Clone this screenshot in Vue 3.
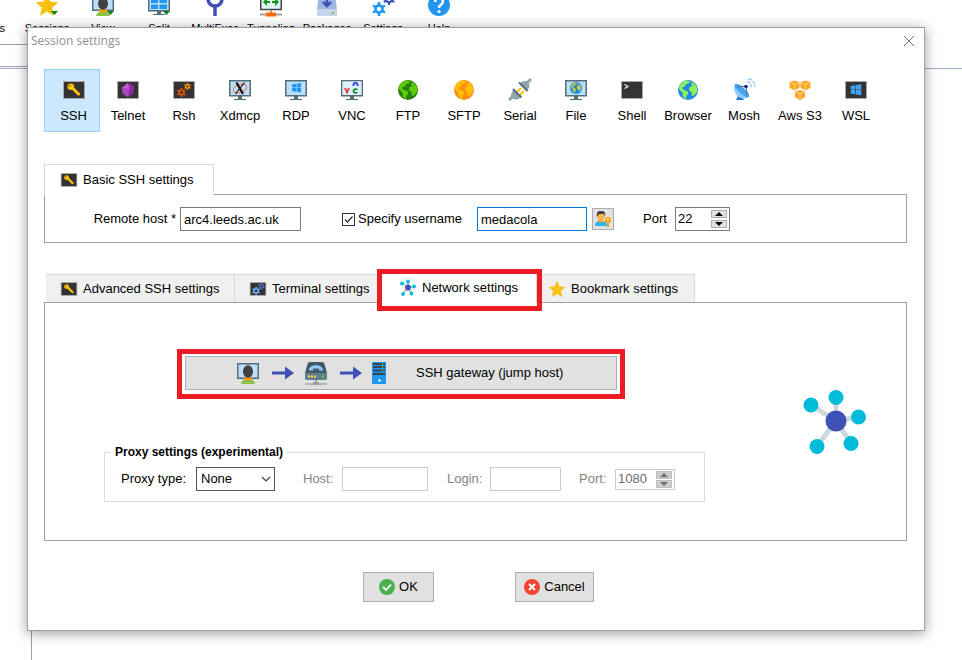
<script setup>
import { ref } from 'vue'

const tools = [
  { name: 'Servers', icon: 'servers' },
  { name: 'Sessions', icon: 'star-menu' },
  { name: 'View', icon: 'view' },
  { name: 'Split', icon: 'split' },
  { name: 'MultiExec', icon: 'fork' },
  { name: 'Tunneling', icon: 'tunnel' },
  { name: 'Packages', icon: 'package' },
  { name: 'Settings', icon: 'gears' },
  { name: 'Help', icon: 'help' },
]
const types = [
  { name: 'SSH', icon: 'key' },
  { name: 'Telnet', icon: 'gem' },
  { name: 'Rsh', icon: 'rsh' },
  { name: 'Xdmcp', icon: 'xdmcp' },
  { name: 'RDP', icon: 'rdp' },
  { name: 'VNC', icon: 'vnc' },
  { name: 'FTP', icon: 'ftp' },
  { name: 'SFTP', icon: 'sftp' },
  { name: 'Serial', icon: 'serial' },
  { name: 'File', icon: 'file' },
  { name: 'Shell', icon: 'shell' },
  { name: 'Browser', icon: 'browser' },
  { name: 'Mosh', icon: 'mosh' },
  { name: 'Aws S3', icon: 'aws' },
  { name: 'WSL', icon: 'wsl' },
]
const selected = ref('SSH')
const tabs = [
  { name: 'Advanced SSH settings', icon: 'key', size: 'wide' },
  { name: 'Terminal settings', icon: 'term-gears', size: 'medium' },
  { name: 'Network settings', icon: 'network-small', size: 'marked' },
  { name: 'Bookmark settings', icon: 'star', size: 'last' },
]
const activeTab = ref('Network settings')
const host = ref('arc4.leeds.ac.uk')
const useName = ref(true)
const username = ref('medacola')
const port = ref(22)
const proxyType = ref('None')
const proxyPort = ref(1080)
</script>

<template>
  <div class="desktop">
    <svg class="defs" aria-hidden="true">
      <symbol id="frame" viewBox="0 0 24 24">
        <rect x="1.5" y="3.5" width="21" height="17" fill="#333" stroke="#a9a9a9" />
      </symbol>
      <symbol id="monitor" viewBox="0 0 24 24">
        <path d="M10 18h4v3h4v1H6v-1h4z" fill="#546e7a" />
        <rect x="1.75" y="2.75" width="20.5" height="15" fill="#bbdefb" stroke="#546e7a" stroke-width="1.5" />
      </symbol>
      <symbol id="gear" viewBox="0 0 12 12">
        <circle cx="6" cy="6" r="3" fill="none" stroke="currentColor" stroke-width="2.2" />
        <path d="M6 0v3M6 9v3M.8 3l2.6 1.5M8.6 7.5L11.2 9M.8 9l2.6-1.5M8.6 4.5L11.2 3" stroke="currentColor" stroke-width="2.2" />
      </symbol>
      <symbol id="land" viewBox="0 0 24 24">
        <path d="M3 9c1-3 4-6 8-6.500l3 1-1 2-3 .5-1 2.500-3 1 1 2 4 1.500 1.500 2.500-2 2-.5 3.500-3-2-.5-4.500-3-2.500zM15.500 4c3 1 5 3.500 5.700 6.500L21 14l-3 3.500-2 .5-.5-4-2.500-1.500.5-3.500 3-1-1.500-2z" fill="currentColor" />
      </symbol>
      <symbol id="windows" viewBox="0 0 24 24">
        <path d="M3 5l8-1.3V11H3zM12 3.5L21 2v9h-9zM3 12h8v7.3L3 18zM12 12h9v9l-9-1.5z" fill="currentColor" />
      </symbol>
      <symbol id="servers" viewBox="0 0 24 24">
        <circle cx="12" cy="12" r="11" fill="#cfd8dc" stroke="#90a4ae" /><path d="M14 17h8l-4 5z" fill="#18851b" />
      </symbol>
      <symbol id="star" viewBox="0 0 24 24">
        <path d="M12 1l3.2 7.5 8 .8-6 5.4 1.8 8L12 18.5 5 22.7l1.8-8-6-5.4 8-.8z" fill="#f4c20d" />
      </symbol>
      <symbol id="star-menu" viewBox="0 0 24 24">
        <use href="#star" /><path d="M16 18h7l-3.500 4z" fill="#11821b" />
      </symbol>
      <symbol id="user-screen" viewBox="0 0 24 24">
        <rect x="1.750" y="2.750" width="20.500" height="14.500" fill="#bbdefb" stroke="#546e7a" stroke-width="1.500" />
        <path d="M5 23c.5-3.500 3-5 7-5s6.500 1.500 7 5z" fill="#8bc34a" />
        <path d="M8.500 16h7v2.500c-2 1.500-5 1.500-7 0z" fill="#ff9800" />
        <ellipse cx="12" cy="10.500" rx="5" ry="6.200" fill="#424242" />
      </symbol>
      <symbol id="view" viewBox="0 0 24 24">
        <use href="#user-screen" /><path d="M16 18h7l-3.500 4z" fill="#11821b" />
      </symbol>
      <symbol id="split" viewBox="0 0 24 24">
        <use href="#monitor" /><path d="M4 5h7v5H4zM12.500 5H20v5h-7.500zM4 11.500h7V16H4zM12.500 11.500H20V16h-7.500z" fill="#2196f3" />
        <path d="M16 18h7l-3.500 4z" fill="#11821b" />
      </symbol>
      <symbol id="fork" viewBox="0 0 24 24">
        <path d="M5 0v6a7 7 0 0 0 14 0V0M12 13v10" fill="none" stroke="#3f51b5" stroke-width="3.500" />
      </symbol>
      <symbol id="tunnel" viewBox="0 0 24 24">
        <rect x="1.750" y="1" width="20.500" height="15.500" fill="#e3f5fd" stroke="#424242" stroke-width="1.500" />
        <path d="M4 9l4-4v3h3v2H8v3zM20 9l-4-4v3h-3v2h3v3z" fill="#0a9c17" />
        <path d="M1 20.500h22v2H1zM11 17h2v3h-2z" fill="#9e9e9e" /><rect x="7" y="19.500" width="10" height="4" fill="#ff6d00" />
      </symbol>
      <symbol id="package" viewBox="0 0 24 24">
        <path d="M4 1h16l2 16H2z" fill="#9fb4df" /><rect x="2" y="16" width="20" height="7" rx="1" fill="#c5d5ee" />
        <path d="M12 3v10M8 9l4 4 4-4" fill="none" stroke="#3f51b5" stroke-width="2.500" /><rect x="17" y="19" width="2" height="2" fill="#64dd17" />
      </symbol>
      <symbol id="gears" viewBox="0 0 24 24">
        <g color="#2196f3"><use href="#gear" x="1" y="9" width="14" height="14" /></g>
        <g color="#3f51b5"><use href="#gear" x="12" y="0" width="12" height="12" /></g>
      </symbol>
      <symbol id="help" viewBox="0 0 24 24">
        <circle cx="12" cy="12" r="11" fill="#2196f3" />
        <path d="M8 9c0-5 8-5 8-.500 0 3-4 3-4 6.500" fill="none" stroke="#fff" stroke-width="2.500" /><circle cx="12" cy="18.500" r="1.600" fill="#fff" />
      </symbol>
      <symbol id="key" viewBox="0 0 24 24">
        <use href="#frame" />
        <path d="M10 9.500l7.500 7.500" stroke="#ffc107" stroke-width="3" /><circle cx="8.800" cy="8.800" r="3.300" fill="#ffc107" /><circle cx="7.800" cy="7.800" r=".7" fill="#333" />
      </symbol>
      <symbol id="gem" viewBox="0 0 24 24">
        <use href="#frame" /><path d="M12 5l6 3.500-1 7-5 3.500-5-3-1.500-6z" fill="#9c27b0" />
        <path d="M12 5l1.500 6-8-1z" fill="#ba68c8" /><path d="M13.500 11l4.500-2.500-1 7-5 3.500z" fill="#8e24aa" /><path d="M5.500 10l8 1L12 19l-5-3z" fill="#ab47bc" />
      </symbol>
      <symbol id="rsh" viewBox="0 0 24 24">
        <use href="#frame" />
        <g color="#e65100"><use href="#gear" x="5" y="10" width="9" height="9" /></g>
        <g color="#ff9800"><use href="#gear" x="12" y="5" width="7" height="7" /></g>
      </symbol>
      <symbol id="term-gears" viewBox="0 0 24 24">
        <use href="#frame" />
        <g color="#64b5f6"><use href="#gear" x="4" y="9" width="11" height="11" /></g>
        <g color="#5c6bc0"><use href="#gear" x="12" y="4" width="9" height="9" /></g>
      </symbol>
      <symbol id="xdmcp" viewBox="0 0 24 24">
        <use href="#monitor" />
        <ellipse cx="12" cy="10.500" rx="7" ry="4" fill="none" stroke="#ff7043" transform="rotate(-20 12 10.500)" />
        <path d="M8.500 4.500l6.500 11.500" stroke="#111" stroke-width="2.200" /><path d="M16.500 4.500L7.500 16" stroke="#111" stroke-width="1.200" />
      </symbol>
      <symbol id="rdp" viewBox="0 0 24 24">
        <use href="#monitor" /><g color="#2196f3"><use href="#windows" x="6" y="4" width="13" height="12" /></g>
      </symbol>
      <symbol id="vnc" viewBox="0 0 24 24">
        <use href="#monitor" /><path d="M2.500 3.500h19V17h-19z" fill="#e1effb" />
        <path d="M5 10l2 4.500L9 10" fill="none" stroke="#e53935" stroke-width="1.800" />
        <path d="M13.500 8V6q2-2.500 4 0v2" fill="none" stroke="#303fdd" stroke-width="1.800" />
        <path d="M17.500 11.500q-4-1-4 1.500t4 1.500" fill="none" stroke="#15852a" stroke-width="1.800" />
      </symbol>
      <symbol id="ftp" viewBox="0 0 24 24">
        <circle cx="12" cy="12" r="10" fill="#2c7d0c" /><g color="#58cf09"><use href="#land" /></g>
      </symbol>
      <symbol id="sftp" viewBox="0 0 24 24">
        <circle cx="12" cy="12" r="10" fill="#ff8f0c" /><g color="#ffc107"><use href="#land" /></g>
      </symbol>
      <symbol id="browser" viewBox="0 0 24 24">
        <circle cx="12" cy="12" r="10" fill="#1e88e5" /><g color="#8cf057"><use href="#land" /></g>
      </symbol>
      <symbol id="serial" viewBox="0 0 24 24">
        <path d="M1 22l4-4M19 5l4-4" stroke="#90a4ae" stroke-width="3" />
        <path d="M9 14l4-4M12 17l4-4" stroke="#ffc107" stroke-width="2" />
        <path d="M5.500 12l7 7c-2 3-6 3-8 1.500s-2-5.500 1-8.500z" fill="#90a4ae" /><path d="M12 5.500l7 7c3-3 3-6 1-8s-5-2-8 1z" fill="#90a4ae" />
        <path d="M5 11l8.500 8.500M11 4.500l8.500 8.500" stroke="#546e7a" stroke-width="2" />
      </symbol>
      <symbol id="file" viewBox="0 0 24 24">
        <use href="#monitor" /><circle cx="12" cy="10" r="6" fill="#1e88e5" /><g color="#c0ca33"><use href="#land" x="5.500" y="3.500" width="13" height="13" /></g>
      </symbol>
      <symbol id="shell" viewBox="0 0 24 24">
        <use href="#frame" /><path d="M4.500 6.500L8 8.500l-3.500 2" fill="none" stroke="#eee" stroke-width="1.200" />
      </symbol>
      <symbol id="mosh" viewBox="0 0 24 24">
        <path d="M4 22l3-6 5 6z" fill="#1976d2" /><path d="M3 6l14 13c-6 3-11 1-13-3s-3-7-1-10z" fill="#90caf9" />
        <ellipse cx="10" cy="12.500" rx="9.500" ry="3" fill="#42a5f5" transform="rotate(43 10 12.500)" />
        <path d="M5 9l9-1 1 9" fill="none" stroke="#546e7a" /><circle cx="14" cy="8.500" r="1.800" fill="#1a237e" />
        <path d="M15 4q4 0 4.500 5M16 1q6 0 7 8" fill="none" stroke="#90caf9" stroke-width="1.300" stroke-dasharray="4 1" />
      </symbol>
      <symbol id="cube" viewBox="0 0 12 12">
        <path d="M6 .5l5.500 2v6L6 11.500.5 8.500v-6z" fill="#ffa726" /><path d="M1 3l5 2 5-2M6 5v6" fill="none" stroke="#ffe0a0" stroke-width=".8" />
      </symbol>
      <symbol id="aws" viewBox="0 0 24 24">
        <use href="#cube" x="1" y="2" width="11" height="11" /><use href="#cube" x="12" y="2" width="11" height="11" /><use href="#cube" x="6.500" y="11.500" width="11" height="11" />
      </symbol>
      <symbol id="wsl" viewBox="0 0 24 24">
        <use href="#frame" /><g color="#42a5f5"><use href="#windows" x="5" y="5" width="14" height="14" /></g>
      </symbol>
      <symbol id="network" viewBox="0 0 66 66">
        <path d="M33 32V9M33 32L8 16M33 32l22-4M33 32l15 22M33 32L14 57" stroke="#cfd8dc" stroke-width="5" />
        <g fill="#00bcd9"><circle cx="33" cy="8.500" r="7.500" /><circle cx="8" cy="16" r="7.500" /><circle cx="55.500" cy="28" r="7.500" /><circle cx="48" cy="54.500" r="7.500" /><circle cx="14" cy="57.500" r="7.500" /></g>
        <circle cx="33" cy="32" r="10.500" fill="#3f51b5" />
      </symbol>
      <symbol id="network-small" viewBox="0 0 18 18">
        <path d="M9 8.500V3M9 8.500L4 4.500M9 8.500l6-1M9 8.500l3.500 6M9 8.500L4 14.500" stroke="#b0bec5" stroke-width="1.500" />
        <g fill="#00bcd9"><circle cx="9" cy="2.500" r="1.900" /><circle cx="3" cy="4.500" r="1.900" /><circle cx="15" cy="7.500" r="1.900" /><circle cx="12.500" cy="14.500" r="1.900" /><circle cx="4" cy="15" r="1.900" /></g>
        <circle cx="9" cy="8.500" r="2.900" fill="#3f51b5" />
      </symbol>
      <symbol id="arrow" viewBox="0 0 24 24">
        <path d="M2 10.500h13V5.500l9 6.500-9 6.500v-5H2z" fill="#3f51b5" />
      </symbol>
      <symbol id="modem" viewBox="0 0 24 24">
        <path d="M6 1h12q2 0 2.500 2L23 12v6H1v-6l2.500-9Q4 1 6 1z" fill="#455a64" /><path d="M1 12h22v5q0 2-2 2H3q-2 0-2-2z" fill="#607d8b" />
        <path d="M5 9.500c0-7 14-7 14 0h-4V7.500H9v2z" fill="#90caf9" />
        <path d="M4 14.500h2v2H4zM7 14.500h2v2H7zM10 14.500h2v2h-2z" fill="#ffe04a" /><path d="M18 14.500h2v2h-2z" fill="#64dd17" />
        <path d="M1 22h22v2H1z" fill="#b0b6b9" /><path d="M11 19h2v2h2v3H9v-3h2z" fill="#9e9e9e" />
      </symbol>
      <symbol id="tower" viewBox="0 0 14 24">
        <path d="M0 1h14v22H0z" fill="#2196f3" /><path d="M1 2h12v2H1zM1 5h12v2H1zM1 8.500h12v2H1zM1 12h12v2H1z" fill="#37474f" />
        <path d="M10 2h1v2h-1zM10 5h1v2h-1zM10 8.500h1v2h-1z" fill="#64dd17" /><path d="M6 19h3v1H6zM7 18h1v3H7z" fill="#fff" />
      </symbol>
      <symbol id="user-key" viewBox="0 0 18 18">
        <path d="M1 16c0-4 2-5 6-5s6 1 6 5z" fill="#29b6f6" /><path d="M5 10h4v2q-2 2-4 0z" fill="#ff9800" />
        <ellipse cx="7" cy="6.500" rx="3.700" ry="4.500" fill="#ffb74d" /><path d="M3 7C2 1 5 1 7 1s5 0 4 6L10 4H5z" fill="#424242" />
        <circle cx="14" cy="10" r="3" fill="#ffa000" /><path d="M13 12h2v5h-2z" fill="#ffa000" /><circle cx="14" cy="9.500" r="1" fill="#fff3e0" />
      </symbol>
    </svg>

    <header class="toolbar">
      <button v-for="t in tools" :key="t.name" class="tool" type="button">
        <svg class="icon"><use :href="'#' + t.icon" /></svg>
        <span>{{ t.name }}</span>
      </button>
    </header>
    <div class="quick"></div>
    <div class="workspace"><div class="terminal"></div></div>

    <section class="dialog" role="dialog" aria-labelledby="dialog-title">
      <div class="titlebar">
        <span id="dialog-title">Session settings</span>
        <button class="close" type="button" aria-label="Close">
          <svg viewBox="0 0 12 12"><path d="M1 1l10 10M11 1L1 11" stroke="#777" fill="none" /></svg>
        </button>
      </div>

      <div class="body">
        <nav class="types">
          <button v-for="t in types" :key="t.name" class="type" :class="{ selected: selected === t.name }" type="button" @click="selected = t.name">
            <svg class="icon"><use :href="'#' + t.icon" /></svg>
            <span>{{ t.name }}</span>
          </button>
        </nav>

        <div class="basic-tab"><svg class="small"><use href="#key" /></svg>Basic SSH settings</div>
        <div class="panel basic">
          <label class="host-label" for="host">Remote host *</label>
          <input id="host" v-model="host" class="field host" type="text">
          <label class="check">
            <input v-model="useName" type="checkbox">
            <svg v-if="useName" class="tick" viewBox="0 0 13 13"><path d="M3 6.500l2.500 2.500 5-5.500" fill="none" stroke="#333" stroke-width="1.300" /></svg>
            <span>Specify username</span>
          </label>
          <input v-model="username" class="field username" type="text" aria-label="Username">
          <button class="creds" type="button" aria-label="Manage credentials"><svg><use href="#user-key" /></svg></button>
          <label class="port-label" for="port">Port</label>
          <div class="spin">
            <input id="port" v-model="port" type="text">
            <div class="steps">
              <button type="button" aria-label="Increase port" @click="port++"><svg viewBox="0 0 8 4"><path d="M0 4l4-4 4 4z" /></svg></button>
              <button type="button" aria-label="Decrease port" @click="port--"><svg viewBox="0 0 8 4"><path d="M0 0l4 4 4-4z" /></svg></button>
            </div>
          </div>
        </div>

        <div class="tabs" role="tablist">
          <button v-for="t in tabs" :key="t.name" class="tab" :class="[t.size, { active: activeTab === t.name }]" role="tab" type="button" :aria-selected="activeTab === t.name" @click="activeTab = t.name">
            <svg class="small"><use :href="'#' + t.icon" /></svg>{{ t.name }}
          </button>
        </div>
        <div class="panel network">
          <div class="options">
            <div class="highlight">
              <button class="gateway" type="button">
                <svg class="icon"><use href="#user-screen" /></svg>
                <svg class="icon"><use href="#arrow" /></svg>
                <svg class="icon"><use href="#modem" /></svg>
                <svg class="icon"><use href="#arrow" /></svg>
                <svg class="tower"><use href="#tower" /></svg>
                <span>SSH gateway (jump host)</span>
              </button>
            </div>
            <fieldset class="proxy">
              <legend>Proxy settings (experimental)</legend>
              <div class="proxy-row">
                <label class="proxy-type" for="ptype">Proxy type:</label>
                <div class="select">
                  <select id="ptype" v-model="proxyType"><option>None</option><option>HTTP</option><option>Socks5</option></select>
                  <svg viewBox="0 0 10 6"><path d="M1 1l4 4 4-4" fill="none" stroke="#444" stroke-width="1.200" /></svg>
                </div>
                <label class="dim phost-label" for="phost">Host:</label>
                <input id="phost" class="field phost" type="text" disabled>
                <label class="dim plogin-label" for="plogin">Login:</label>
                <input id="plogin" class="field plogin" type="text" disabled>
                <label class="dim pport-label" for="pport">Port:</label>
                <div class="spin off">
                  <input id="pport" v-model="proxyPort" type="text" disabled>
                  <div class="steps">
                    <button type="button" disabled aria-label="Increase proxy port"><svg viewBox="0 0 8 4"><path d="M0 4l4-4 4 4z" /></svg></button>
                    <button type="button" disabled aria-label="Decrease proxy port"><svg viewBox="0 0 8 4"><path d="M0 0l4 4 4-4z" /></svg></button>
                  </div>
                </div>
              </div>
            </fieldset>
          </div>
          <svg class="emblem"><use href="#network" /></svg>
        </div>

        <footer class="actions">
          <button type="button" class="action ok">
            <svg viewBox="0 0 16 16"><circle cx="8" cy="8" r="8" fill="#4caf50" /><path d="M4 8l3 3 5-5.500" fill="none" stroke="#fff" stroke-width="1.800" /></svg>OK
          </button>
          <button type="button" class="action cancel">
            <svg viewBox="0 0 16 16"><circle cx="8" cy="8" r="8" fill="#f44336" /><path d="M5 5l6 6M11 5l-6 6" stroke="#fff" stroke-width="2" /></svg>Cancel
          </button>
        </footer>
      </div>
    </section>
  </div>
</template>

<style>
body { margin: 0; background: #fff; }
</style>

<style scoped>
.desktop, .desktop * { box-sizing: border-box; }
.desktop {
  position: relative;
  display: flex;
  flex-direction: column;
  min-height: 100vh;
  overflow: hidden;
  font: 13px/16px "Liberation Sans", Arial, sans-serif;
  color: #000;
}
.defs { position: absolute; width: 0; height: 0; }
button, input, select { font: inherit; color: inherit; margin: 0; }
button { padding: 0; border: 0; background: none; }
svg { display: block; flex: none; }
.icon { width: 24px; height: 24px; }
.small { width: 18px; height: 18px; }

.toolbar { display: flex; margin: -7px 0 0 -37px; height: 51px; }
.tool {
  width: 56px;
  flex: none;
  display: flex;
  flex-direction: column;
  align-items: center;
  gap: 3px;
  font-size: 11px;
}
.tool:first-child { padding-right: 10px; }
.quick { width: 200px; height: 23px; border: solid #a0a0a0; border-width: 1px 0; }
.workspace { flex: 1; margin-top: 1px; border-top: 1px solid #9fb0cc; padding-left: 31px; display: flex; }
.terminal { flex: 1; border-left: 1px solid #a0a0a0; }

.dialog {
  position: absolute;
  top: 27px;
  left: 27px;
  right: 37px;
  background: #fff;
  border: 1px solid #a0a0a0;
  box-shadow: 0 2px 12px rgba(0, 0, 0, 0.4);
}
.titlebar {
  height: 25px;
  display: flex;
  align-items: center;
  justify-content: space-between;
  padding: 0 9px 0 3px;
  font: 12px/16px "Open Sans", "Noto Sans", sans-serif;
  color: #8f8f8f;
}
.close svg { width: 12px; height: 12px; }
.body { padding: 16px 17px 28px 16px; }

.types { display: flex; margin-bottom: 32px; }
.type {
  width: 56px;
  height: 63px;
  display: flex;
  flex-direction: column;
  align-items: center;
  justify-content: center;
  gap: 6px;
  border: 1px solid transparent;
  white-space: nowrap;
}
.type.selected { background: #cce8ff; border-color: #99d1ff; padding: 1px 0 0 3px; }

.basic-tab {
  position: relative;
  width: 170px;
  height: 31px;
  margin-bottom: -1px;
  padding-left: 15px;
  display: flex;
  align-items: center;
  gap: 5px;
  background: #fff;
  border: 1px solid #d9d9d9;
  border-bottom: 0;
}
.panel { border: 1px solid #a0a0a0; }
.basic { display: flex; align-items: center; padding: 12px 0 11px 48px; }
.host-label { width: 83px; margin-right: 4px; text-align: right; }
.field { height: 24px; padding: 0 3px; border: 1px solid #7a7a7a; background: #fff; border-radius: 0; outline: 0; }
.host { width: 121px; }
.check { width: 130px; margin: 0 5px 0 41px; display: grid; grid-template-columns: 13px 1fr; align-items: center; gap: 3px; }
.check input, .tick { grid-area: 1 / 1; width: 13px; height: 13px; }
.check input { appearance: none; border: 1px solid #333; background: #fff; }
.tick { pointer-events: none; }
.check span { grid-area: 1 / 2; }
.username { width: 110px; border-color: #0078d7; }
.creds { width: 22px; height: 22px; margin: 0 29px 0 5px; display: grid; place-items: center; background: #e1e1e1; border: 1px solid #adadad; }
.creds svg { width: 18px; height: 18px; }
.port-label { width: 32px; }
.spin { width: 55px; height: 24px; display: flex; border: 1px solid #7a7a7a; padding: 2px; }
.spin input { flex: 1; min-width: 0; padding: 0; border: 0; background: none; outline: 0; }
.steps { width: 16px; display: flex; flex-direction: column; justify-content: space-between; }
.steps button { height: 8px; display: grid; place-items: center; background: #e1e1e1; border: 1px solid #adadad; }
.steps svg { width: 8px; height: 4px; }

.tabs { display: flex; align-items: flex-end; margin-top: 29px; padding-left: 2px; }
.tab {
  height: 28px;
  display: flex;
  align-items: center;
  gap: 5px;
  padding-left: 14px;
  background: #f0f0f0;
  border: 1px solid #d9d9d9;
  border-width: 1px 1px 0 0;
  white-space: nowrap;
}
.wide { width: 189px; }
.medium { width: 147px; }
.marked { width: 155px; padding-left: 17px; }
.last { width: 158px; padding-left: 11px; }
.tab.active { height: 31px; margin-bottom: -1px; background: #fff; }
.marked { position: relative; z-index: 1; }
.marked::after { content: ""; position: absolute; inset: -4px -6px -8px -5px; border: 5px solid #ed1c24; }
.network { display: flex; align-items: center; justify-content: space-between; padding-right: 37px; }
.options { padding: 46px 0 38px 59px; }
.highlight { width: 448px; margin-left: 73px; border: 5px solid #ed1c24; padding: 2px 3px 4px; }
.gateway {
  width: 100%;
  height: 34px;
  display: flex;
  align-items: center;
  padding-left: 50px;
  gap: 10px;
  background: #e1e1e1;
  border: 1px solid #adadad;
}
.gateway .tower { width: 14px; height: 24px; }
.gateway span { margin-left: 20px; }

.proxy { width: 601px; min-width: 0; margin: 46px 0 0; padding: 8px 29px 10px 16px; border: 1px solid #dcdcdc; }
.proxy legend { margin-left: -10px; padding: 0 4px; font: bold 12px/14px "Liberation Sans", Arial, sans-serif; }
.proxy-row { display: flex; align-items: center; }
.proxy-type { width: 75px; white-space: nowrap; }
.select { display: grid; width: 79px; align-items: center; }
.select select, .select svg { grid-area: 1 / 1; }
.select select { appearance: none; height: 24px; padding: 0 4px; background: #fff; border: 1px solid #555; border-radius: 0; }
.select svg { width: 10px; height: 6px; justify-self: end; margin-right: 4px; pointer-events: none; }
.dim { color: #838383; }
.field:disabled { border-color: #ccc; }
.phost-label { width: 39px; margin-left: 28px; }
.phost { width: 86px; }
.plogin-label { width: 43px; margin-left: 19px; }
.plogin { width: 71px; }
.pport-label { width: 36px; margin-left: 18px; }
.spin.off { width: 60px; height: 21px; border-color: #ccc; padding: 1px 2px; color: #6d6d6d; }
.off .steps button { background: #ccc; border-color: #bfbfbf; }
.off .steps svg { fill: #6d6d6d; }
.emblem { width: 66px; height: 66px; }

.actions { display: flex; justify-content: center; gap: 81px; margin-top: 31px; padding-left: 6px; }
.action { height: 30px; display: flex; align-items: center; justify-content: center; gap: 4px; background: #e1e1e1; border: 1px solid #adadad; }
.action svg { width: 16px; height: 16px; }
.ok { width: 71px; }
.cancel { width: 79px; }
</style>
